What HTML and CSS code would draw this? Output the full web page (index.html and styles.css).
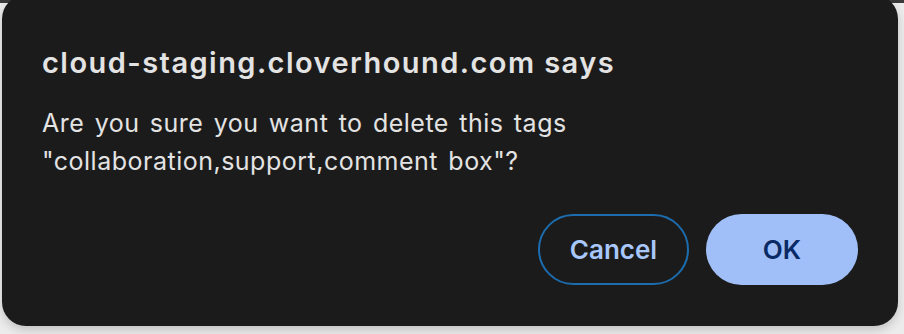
FILE: index.html
```html
<!DOCTYPE html>
<html lang="en">
<head>
<meta charset="utf-8">
<title>Confirm</title>
<link rel="stylesheet" href="styles.css">
</head>
<body>
<div class="topbar"></div>
<div class="page">
  <div class="dialog" role="dialog">
    <h1 class="title">cloud-staging.cloverhound.com says</h1>
    <p class="message">Are you sure you want to delete this tags<br>"collaboration,support,comment box"?</p>
    <div class="actions">
      <button class="btn btn-cancel">Cancel</button>
      <button class="btn btn-ok">OK</button>
    </div>
  </div>
</div>
</body>
</html>
```

FILE: styles.css
```css
html, body {
  margin: 0;
  padding: 0;
}
body {
  width: 904px;
  height: 334px;
  overflow: hidden;
  background: #ececec;
  font-family: Inter, "Noto Sans", sans-serif;
}
.topbar {
  height: 3px;
  background: #3a3a3a;
}
.page {
  padding: 0 6px 0 2px;
}
.dialog {
  margin-top: -8px;
  height: 331px;
  box-sizing: border-box;
  background: #1b1b1b;
  border-radius: 24px;
  padding: 50px 40px 41px 40px;
  box-shadow: 0 4px 10px rgba(0, 0, 0, 0.18);
  display: flex;
  flex-direction: column;
}
.title {
  margin: 0;
  font-size: 29px;
  line-height: 36px;
  font-weight: 600;
  letter-spacing: 1.45px;
  color: #e3e3e3;
}
.message {
  margin: 23px 0 0 0;
  font-size: 25px;
  line-height: 38px;
  font-weight: 400;
  letter-spacing: 0.5px;
  word-spacing: 2.8px;
  color: #e3e3e3;
}
.actions {
  margin-top: auto;
  display: flex;
  justify-content: flex-end;
  gap: 17px;
}
.btn {
  width: 152px;
  height: 71px;
  border-radius: 36px;
  font-family: inherit;
  font-size: 26px;
  font-weight: 600;
  box-sizing: border-box;
  cursor: pointer;
}
.btn-cancel {
  background: transparent;
  border: 2px solid #1c6cae;
  color: #a8c7fa;
  width: 151px;
}
.btn-ok {
  background: #a0bff8;
  border: none;
  color: #0a2a66;
}
```
